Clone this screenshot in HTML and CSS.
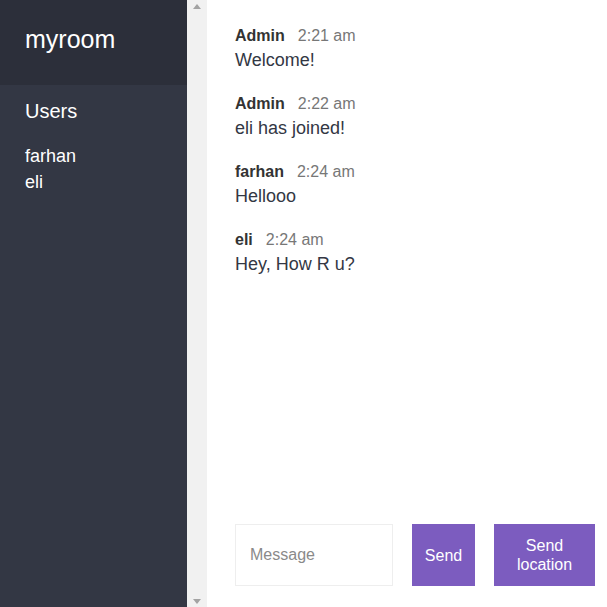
FILE: index.html
```
<!DOCTYPE html>
<html>
<head>
<meta charset="utf-8">
<link rel="stylesheet" href="styles.css">
</head>
<body>
<div class="chat">
  <aside class="sidebar">
    <h2 class="room-title">myroom</h2>
    <h3 class="list-title">Users</h3>
    <ul class="users">
      <li>farhan</li>
      <li>eli</li>
    </ul>
  </aside>
  <div class="scrollbar">
    <span class="arrow arrow-up"></span>
    <span class="arrow arrow-down"></span>
  </div>
  <main class="main">
    <div class="messages">
      <div class="message">
        <p class="meta"><span class="name">Admin</span><span class="time">2:21 am</span></p>
        <p class="text">Welcome!</p>
      </div>
      <div class="message">
        <p class="meta"><span class="name">Admin</span><span class="time">2:22 am</span></p>
        <p class="text">eli has joined!</p>
      </div>
      <div class="message">
        <p class="meta"><span class="name">farhan</span><span class="time">2:24 am</span></p>
        <p class="text">Hellooo</p>
      </div>
      <div class="message">
        <p class="meta"><span class="name">eli</span><span class="time">2:24 am</span></p>
        <p class="text">Hey, How R u?</p>
      </div>
    </div>
    <form class="compose">
      <input class="input" type="text" placeholder="Message">
      <button class="btn btn-send" type="button">Send</button>
      <button class="btn btn-location" type="button">Send location</button>
    </form>
  </main>
</div>
</body>
</html>
```
FILE: styles.css
```
* { box-sizing: border-box; }
html, body { margin: 0; padding: 0; }
body {
  font-family: "Liberation Sans", Arial, sans-serif;
  color: #333744;
  background: #fff;
}
.chat {
  display: flex;
  height: 607px;
}
.sidebar {
  width: 187px;
  flex-shrink: 0;
  background: #333744;
  color: #fff;
}
.room-title {
  margin: 0;
  height: 85px;
  padding: 24px 25px 0;
  font-size: 25px;
  line-height: 30px;
  font-weight: 400;
  background: #2c2f3a;
}
.list-title {
  margin: 14px 0 0;
  padding: 0 25px;
  font-size: 20px;
  line-height: 24px;
  font-weight: 400;
}
.users {
  list-style: none;
  margin: 20px 0 0;
  padding: 0 25px;
  font-size: 18px;
  line-height: 26px;
}
.scrollbar {
  width: 20px;
  flex-shrink: 0;
  background: #f1f1f1;
  display: flex;
  flex-direction: column;
  justify-content: space-between;
  align-items: center;
  padding: 4px 0 3px;
}
.arrow {
  width: 0;
  height: 0;
  border-left: 4px solid transparent;
  border-right: 4px solid transparent;
}
.arrow-up { border-bottom: 5px solid #a3a3a3; }
.arrow-down { border-top: 5px solid #a3a3a3; }
.main {
  flex: 1;
  display: flex;
  flex-direction: column;
}
.messages {
  flex: 1;
  padding: 26px 28px 0;
}
.message { margin-bottom: 21px; }
.meta {
  margin: 0;
  font-size: 16px;
  line-height: 20px;
}
.name {
  font-weight: 700;
  margin-right: 13px;
  color: #333;
}
.time { color: #777; }
.text {
  margin: 0;
  padding-top: 1px;
  font-size: 18px;
  line-height: 26px;
}
.compose {
  display: flex;
  padding: 0 12px 21px 28px;
  gap: 19px;
  margin: 0;
}
.input {
  width: 158px;
  height: 62px;
  border: 1px solid #eee;
  padding: 0 14px;
  font-family: "Liberation Sans", Arial, sans-serif;
  font-size: 16px;
  color: #333744;
  outline: none;
}
.input::placeholder { color: #8a8a8a; }
.btn {
  height: 62px;
  border: none;
  background: #7c5cbf;
  color: #fff;
  font-family: "Liberation Sans", Arial, sans-serif;
  font-size: 16px;
  line-height: 19px;
  padding: 0;
}
.btn-send { width: 63px; }
.btn-location { width: 101px; padding: 0 20px; }
```
